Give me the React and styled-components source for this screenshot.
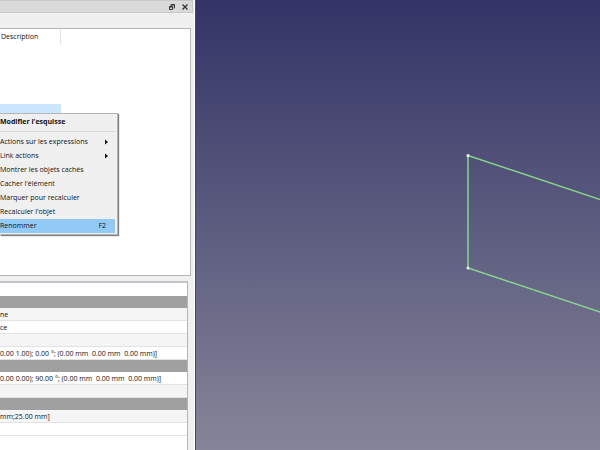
import React, { useState } from 'react';
import styled, { createGlobalStyle, css } from 'styled-components';

const GlobalStyle = createGlobalStyle`
  * {
    box-sizing: border-box;
  }

  body {
    margin: 0;
    font-family: "Open Sans", "Noto Sans", sans-serif;
    font-size: 7px;
    line-height: 12px;
    color: #111;
    overflow: hidden;
  }
`

const Workbench = styled.div`
  display: grid;
  grid-template-columns: 195px 1fr;
  height: 100vh;
`

const Dock = styled.aside`
  display: flex;
  flex-direction: column;
  min-height: 0;
  background: #f0f0f0;
  border-right: 1px solid #fff;
`

const TitleBar = styled.header`
  display: flex;
  flex: none;
  justify-content: flex-end;
  align-items: center;
  gap: 5px;
  height: 13px;
  margin-right: 1px;
  padding-right: 3px;
  background: #dadada;
  border: 1px solid #c8c8c8;
  border-width: 1px 1px 1px 0;
`

const TitleButton = styled.button`
  display: flex;
  padding: 0;
  border: none;
  background: none;
  color: #333;
`

const TreePanel = styled.section`
  position: relative;
  flex: 0 0 55%;
  margin: 15px 3px 5px 0;
  background: #fff;
  border: 1px solid #b4b6bb;
  border-left: none;
`

const TreeTable = styled.table`
  width: 61px;
  border-collapse: collapse;
  text-align: left;

  th {
    height: 15px;
    padding: 0 1px;
    font-weight: normal;
    border-right: 1px solid #e4e4e4;
  }
  td {
    height: 12px;
    padding: 0;
  }
`

const TreeRow = styled.tr`
  ${props => props.$selected && css`
    background: #cce6fd;
  ` }
`

const Menu = styled.ul`
  position: absolute;
  top: 84px;
  left: 0;
  width: 118px;
  margin: 0;
  padding: 1px 2px 1px 0;
  list-style: none;
  background: #f0f0f0;
  border: 1px solid #b4b4b4;
  border-left: none;
  box-shadow: 1px 1px 1px #808080;
`

const MenuItem = styled.button`
  display: flex;
  align-items: center;
  width: 100%;
  height: 14px;
  padding: 0;
  border: none;
  background: none;
  color: inherit;
  font: inherit;
  font-weight: ${props => (props.$main ? 'bold' : 'normal')};
  text-align: left;
  white-space: nowrap;

  &:hover, &:focus {
    outline: none;
    background: #91c9f7;
  }
  ${props => props.$active && css`
    background: #91c9f7;
  ` }
  svg {
    margin-left: auto;
    margin-right: 5px;
  }
`

const Shortcut = styled.span`
  margin-left: auto;
  margin-right: 9px;
`

const Separator = styled.li`
  height: 1px;
  margin: 2px 0 3px;
  background: #d8d8d8;
`

const PropertyPanel = styled.section`
  flex: 1;
  min-height: 0;
  margin-right: 6px;
  background: #fff;
  border-top: 2px solid #c4c5ca;
  border-right: 1px solid #b4b6bb;
  overflow: hidden;
`

const PropertyTable = styled.table`
  width: 100%;
  border-collapse: collapse;

  th {
    height: 13px;
    padding: 0;
  }
`

const GroupRow = styled.tr`
  height: 12px;
  background: #a0a0a0;
`

const PropertyRow = styled.tr`
  height: 13px;
  background: ${props => (props.$shaded ? '#f5f5f5' : '#fff')};

  td {
    padding: 2px 0 0;
    line-height: 10px;
    border-bottom: 1px solid #e2e2e2;
    white-space: pre;
  }
`

const Viewport = styled.main`
  min-width: 0;
  background: linear-gradient(#333366, #858599);
  border-left: 1px solid #47476e;
  overflow: hidden;

  svg {
    display: block;
    width: 100%;
    height: 100%;
  }
`

const actions = [
  { label: 'Actions sur les expressions', submenu: true },
  { label: 'Link actions', submenu: true },
  { label: 'Montrer les objets cachés' },
  { label: "Cacher l'élément" },
  { label: 'Marquer pour recalculer' },
  { label: "Recalculer l'objet" },
  { label: 'Renommer', shortcut: 'F2' },
];

const properties = [
  { group: true },
  { value: 'ne', shaded: true },
  { value: 'ce' },
  { value: '', shaded: true },
  { value: '0.00 1.00); 0.00 °; (0.00 mm  0.00 mm  0.00 mm)]' },
  { group: true },
  { value: '0.00 0.00); 90.00 °; (0.00 mm  0.00 mm  0.00 mm)]' },
  { value: '', shaded: true },
  { group: true },
  { value: 'mm;25.00 mm]', shaded: true },
  { value: '' },
];

function FloatIcon() {
  return (
    <svg width="8" height="8" viewBox="0 0 8 8" fill="none" stroke="currentColor">
      <path d="M3 3V1.5h3.500V5H5.500M3 2h3.500" />
      <path d="M1.500 3.500h3v3h-3zM1.500 4h3" />
    </svg>
  );
}

function CloseIcon() {
  return (
    <svg width="8" height="8" viewBox="0 0 8 8" stroke="currentColor" strokeWidth="1.3">
      <path d="M1.500 1.500l5 5M6.500 1.500l-5 5" />
    </svg>
  );
}

function ContextMenu() {
  const [active, setActive] = useState('Renommer');

  return (
    <Menu>
      <li><MenuItem $main>Modifier l'esquisse</MenuItem></li>
      <Separator role="separator" />
      {actions.map(({ label, submenu, shortcut }) => (
        <li key={label}>
          <MenuItem $active={active === label} onMouseEnter={() => setActive(label)}>
            <span>{label}</span>
            {submenu && <svg width="5" height="6" viewBox="0 0 5 6"><path d="M0 0.500v5l3-2.500z" fill="#111" /></svg>}
            {shortcut && <Shortcut>{shortcut}</Shortcut>}
          </MenuItem>
        </li>
      ))}
    </Menu>
  );
}

// left end of the sketched rectangle, its right end runs out of the view
function Sketch() {
  return (
    <svg>
      <path d="M872 355.500L272 155.500V268L872 468" fill="none" stroke="#87d78c" strokeWidth="1.5" />
      <g fill="#f2f2f2">
        <circle cx="272" cy="155.500" r="1.500" />
        <circle cx="272" cy="268" r="1.500" />
      </g>
    </svg>
  );
}

function App() {
  return (
    <Workbench>
      <GlobalStyle />
      <Dock>
        <TitleBar>
          <TitleButton aria-label="Détacher"><FloatIcon /></TitleButton>
          <TitleButton aria-label="Fermer"><CloseIcon /></TitleButton>
        </TitleBar>
        <TreePanel>
          <TreeTable>
            <thead>
              <tr><th>Description</th></tr>
            </thead>
            <tbody>
              {[0, 1, 2, 3, 4, 5].map(i => <TreeRow key={i} $selected={i === 5}><td /></TreeRow>)}
            </tbody>
          </TreeTable>
          <ContextMenu />
        </TreePanel>
        <PropertyPanel>
          <PropertyTable>
            <thead>
              <tr><th aria-label="Valeur" /></tr>
            </thead>
            <tbody>
              {properties.map((row, i) => (row.group
                ? <GroupRow key={i}><td /></GroupRow>
                : <PropertyRow key={i} $shaded={row.shaded}><td>{row.value}</td></PropertyRow>
              ))}
            </tbody>
          </PropertyTable>
        </PropertyPanel>
      </Dock>
      <Viewport>
        <Sketch />
      </Viewport>
    </Workbench>
  );
}

export default App;
